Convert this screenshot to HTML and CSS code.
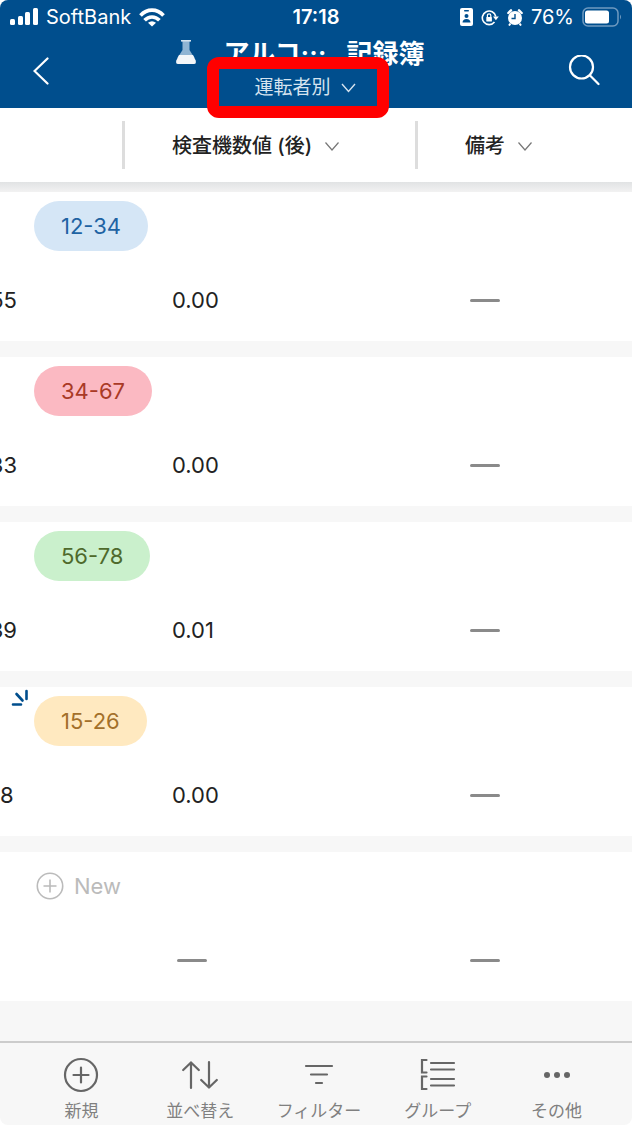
FILE: index.html
```html
<!DOCTYPE html>
<html lang="ja">
<head>
    <meta charset="UTF-8">
    <meta name="viewport" content="width=device-width, initial-scale=1.0">
    <title>アルコール記録簿</title>
    <link rel="stylesheet" href="styles.css">
</head>
<body>
<div class="app">

    <!-- Header -->
    <header class="header">
        <div class="status-bar">
            <div class="status-left">
                <svg width="28" height="18" viewBox="0 0 28 18" fill="#fff">
                    <rect x="0" y="11" width="5" height="6" rx="1.5"/>
                    <rect x="8" y="8" width="5" height="9" rx="1.5"/>
                    <rect x="15" y="4" width="5" height="13" rx="1.5"/>
                    <rect x="23" y="0" width="5" height="17" rx="1.5"/>
                </svg>
                <span>SoftBank</span>
                <svg width="26" height="19" viewBox="0 0 26 19" fill="none" stroke="#fff" stroke-width="3.6">
                    <path d="M1.5 7.5C8 .3 18 .3 24.500 7.500"/>
                    <path d="M5.600 12.300C9.800 7.800 16.200 7.800 20.400 12.300"/>
                    <path d="M13 18.500L9 14.800Q13 11.500 17 14.800Z" fill="#fff" stroke="none"/>
                </svg>
            </div>
            <span class="clock">17:18</span>
            <div class="status-right">
                <svg width="13" height="18" viewBox="0 0 13 18">
                    <rect width="13" height="18" rx="2" fill="#fff"/>
                    <rect x="4" y="2" width="5" height="1.500" rx=".7" fill="#004e8d"/>
                    <circle cx="6.500" cy="8" r="2" fill="#004e8d"/>
                    <path d="M2.500 14.500Q2.700 11 6.500 11T10.500 14.500Z" fill="#004e8d"/>
                </svg>
                <svg width="18" height="17" viewBox="0 0 18 17" fill="none" stroke="#fff" stroke-width="1.600">
                    <path d="M14.800 7.500A6.800 6.800 0 1 0 13.500 13"/>
                    <path d="M12 7.500h5.800l-2.900 3.700z" fill="#fff" stroke="none"/>
                    <rect x="5.300" y="8" width="5.600" height="4.500" rx=".6" fill="#fff" stroke="none"/>
                    <path d="M6.400 8V6.500a1.700 1.700 0 0 1 3.400 0V8" stroke-width="1.200"/>
                </svg>
                <svg width="16" height="17" viewBox="0 0 16 17" fill="none" stroke="#fff">
                    <circle cx="8" cy="9" r="7" fill="#fff" stroke="none"/>
                    <path d="M1.300 4L4 1.300M14.700 4L12 1.300" stroke-width="2.400" stroke-linecap="round"/>
                    <path d="M3.500 14.500L2 16.500M12.500 14.500L14 16.500" stroke-width="2"/>
                    <path d="M8 5V9.500H4.500" stroke="#004e8d" stroke-width="1.400"/>
                </svg>
                <span>76%</span>
                <svg width="40" height="20" viewBox="0 0 40 20">
                    <rect x="1" y="1" width="35" height="18" rx="5" fill="none" stroke="#6f9ac0" stroke-width="1.500"/>
                    <rect x="3" y="3.500" width="24" height="13" rx="2.500" fill="#fff"/>
                    <path d="M38 7.500q2 2.500 0 5z" fill="#6f9ac0"/>
                </svg>
            </div>
        </div>

        <div class="title-bar">
            <button class="icon-button back" aria-label="戻る">
                <svg width="16" height="28" viewBox="0 0 16 28" fill="none" stroke="#fff" stroke-width="2.200" stroke-linecap="round">
                    <path d="M14.500 1.500L1.500 14L14.500 26.500"/>
                </svg>
            </button>
            <div class="titles">
                <div class="title">
                    <svg class="flask" width="22" height="26" viewBox="0 0 22 26">
                        <path d="M6.500 1h9v1.500h-1v8.500l5 8H2.500l5-8V2.500h-1z" fill="#8fb4d3"/>
                        <path d="M6 1h10v1.500H6z" fill="#d5e3ef"/>
                        <path d="M4 16h14l2.700 5.500Q21.500 25 19 25H3Q.500 25 1.300 21.500z" fill="#f3f6f9"/>
                    </svg>
                    <h1><span>アルコ…</span><span>記録簿</span></h1>
                </div>
                <button class="view-switch">
                    <span>運転者別</span>
                    <svg width="15" height="10" viewBox="0 0 15 10" fill="none" stroke="#d5e3ef" stroke-width="1.400">
                        <path d="M1 1L7.500 8.500L14 1"/>
                    </svg>
                </button>
            </div>
            <button class="icon-button search" aria-label="検索">
                <svg width="32" height="32" viewBox="0 0 32 32" fill="none" stroke="#fff" stroke-width="2.200" stroke-linecap="round">
                    <circle cx="13.500" cy="12" r="11.500"/>
                    <path d="M21.800 20.300L30.500 29"/>
                </svg>
            </button>
        </div>
    </header>

    <!-- Records -->
    <table class="records">
        <colgroup>
            <col class="col-time">
            <col class="col-value">
            <col>
        </colgroup>
        <thead>
            <tr>
                <td></td>
                <th scope="col">
                    <button class="column-button">検査機数値 (後)
                        <svg width="14" height="9" viewBox="0 0 14 9" fill="none" stroke="#777" stroke-width="1.200"><path d="M.5 .5L7 8L13.500 .5"/></svg>
                    </button>
                </th>
                <th scope="col">
                    <button class="column-button">備考
                        <svg width="14" height="9" viewBox="0 0 14 9" fill="none" stroke="#777" stroke-width="1.200"><path d="M.5 .5L7 8L13.500 .5"/></svg>
                    </button>
                </th>
            </tr>
        </thead>
        <tbody>
            <tr class="car first">
                <th colspan="3"><span class="pill blue">12-34</span></th>
            </tr>
            <tr class="values">
                <td><div class="clip">55</div></td>
                <td>0.00</td>
                <td><span class="dash"></span></td>
            </tr>
        </tbody>
        <tbody>
            <tr class="car">
                <th colspan="3"><span class="pill red">34-67</span></th>
            </tr>
            <tr class="values">
                <td><div class="clip">33</div></td>
                <td>0.00</td>
                <td><span class="dash"></span></td>
            </tr>
        </tbody>
        <tbody>
            <tr class="car">
                <th colspan="3"><span class="pill green">56-78</span></th>
            </tr>
            <tr class="values">
                <td><div class="clip">39</div></td>
                <td>0.01</td>
                <td><span class="dash"></span></td>
            </tr>
        </tbody>
        <tbody>
            <tr class="car">
                <th colspan="3">
                    <svg class="new-mark" width="18" height="18" viewBox="0 0 18 18" fill="none" stroke="#004e8d" stroke-width="2.600" stroke-linecap="round">
                        <path d="M2 15.500H10M5.500 5L11.500 11.500M15.500 2V10"/>
                    </svg>
                    <span class="pill yellow">15-26</span>
                </th>
            </tr>
            <tr class="values">
                <td><div class="clip short">8</div></td>
                <td>0.00</td>
                <td><span class="dash"></span></td>
            </tr>
        </tbody>
        <tbody>
            <tr class="car">
                <th colspan="3">
                    <button class="new-button">
                        <svg width="28" height="28" viewBox="0 0 28 28" fill="none" stroke="#bbb" stroke-width="1.600">
                            <circle cx="14" cy="14" r="12.700"/>
                            <path d="M7.500 14H20.500M14 7.500V20.500"/>
                        </svg>
                        New
                    </button>
                </th>
            </tr>
            <tr class="values">
                <td></td>
                <td><span class="dash"></span></td>
                <td><span class="dash"></span></td>
            </tr>
        </tbody>
    </table>

    <!-- Toolbar -->
    <nav class="toolbar">
        <button>
            <svg width="36" height="36" viewBox="0 0 36 36">
                <circle cx="18" cy="18" r="16"/>
                <path d="M10.500 18H25.500M18 10.500V25.500"/>
            </svg>
            新規
        </button>
        <button>
            <svg width="36" height="36" viewBox="0 0 36 36">
                <path d="M9 31V5.500M1.200 13L9 5.500L16.800 13M27 5V30.500M19.200 23L27 30.500L34.800 23"/>
            </svg>
            並べ替え
        </button>
        <button>
            <svg width="36" height="36" viewBox="0 0 36 36">
                <path d="M5 9H31M10 17.500H26M15 26H21"/>
            </svg>
            フィルター
        </button>
        <button>
            <svg width="36" height="36" viewBox="0 0 36 36">
                <path d="M11 6H34M11 12.500H34M11 22H34M11 28.500H34M6.500 3H2V15.500H6.500M6.500 19.500H2V32H6.500"/>
            </svg>
            グループ
        </button>
        <button>
            <svg class="dots" width="36" height="36" viewBox="0 0 36 36">
                <circle cx="8" cy="18" r="3"/>
                <circle cx="18" cy="18" r="3"/>
                <circle cx="28" cy="18" r="3"/>
            </svg>
            その他
        </button>
    </nav>

</div>
</body>
</html>
```

FILE: styles.css
```css
* {
    margin: 0;
    padding: 0;
    box-sizing: border-box;
}
body {
    background: #fff;
    font-family: Inter, "Noto Sans CJK JP", sans-serif;
    color: #222;
}
button {
    background: none;
    border: none;
    font: inherit;
    color: inherit;
    cursor: pointer;
}
svg {
    display: block;
    flex-shrink: 0;
}
.app {
    display: flex;
    flex-direction: column;
    min-height: 100vh;
    background: #f7f7f7;
    border-radius: 8px;
}

/* Header */
.header {
    background: #004e8d;
    color: #fff;
    border-radius: 8px 8px 0 0;
}
.status-bar {
    display: grid;
    grid-template-columns: 1fr auto 1fr;
    align-items: center;
    height: 34px;
    padding: 0 10px;
    font-size: 20px;
    line-height: 24px;
}
.status-left, .status-right {
    display: flex;
    align-items: center;
    gap: 8px;
}
.status-right {
    justify-content: flex-end;
}
.clock {
    font-weight: 600;
}
.title-bar {
    display: flex;
    height: 74px;
}
.icon-button {
    display: flex;
    align-items: center;
}
.back {
    width: 62px;
    padding-left: 33px;
}
.search {
    width: 98px;
    padding-left: 34px;
}
.titles {
    flex: 1;
    display: flex;
    flex-direction: column;
    align-items: center;
}
.title {
    display: flex;
    align-items: center;
    gap: 26px;
    height: 36px;
    padding-left: 4px;
}
.title h1 {
    display: flex;
    gap: 20px;
    font-size: 26px;
    line-height: 36px;
    font-weight: 700;
    font-family: "Noto Sans CJK JP", sans-serif;
}
.view-switch {
    position: relative;
    z-index: 1;
    display: flex;
    align-items: center;
    justify-content: center;
    flex-shrink: 0;
    gap: 10px;
    width: 182px;
    height: 61px;
    margin-top: -13px;
    padding-left: 14px;
    background: #004e8d;
    border: 12px solid #f00;
    border-radius: 12px;
    color: #d5e3ef;
    font-size: 19px;
    line-height: 28px;
    font-weight: 400;
}

/* Records table */
.records {
    width: 100%;
    table-layout: fixed;
    border-spacing: 0;
    background: #fff;
    font-size: 22px;
    line-height: 28px;
}
.col-time {
    width: 122px;
}
.col-value {
    width: 293px;
}
.records th {
    text-align: left;
    font-weight: 400;
}
.records thead tr {
    height: 74px;
}
.column-button {
    display: flex;
    align-items: center;
    gap: 13px;
    width: 100%;
    height: 48px;
    padding: 2px 0 0 47px;
    border-left: 3px solid #ddd;
    font-size: 20px;
    font-weight: 500;
    white-space: nowrap;
}
.car th {
    position: relative;
    height: 59px;
    padding: 9px 0 0 34px;
}
/* shadow of the column bar */
.first th {
    height: 69px;
    padding-top: 19px;
    background: linear-gradient(#e1e3e4, #f2f2f2) top / 100% 10px no-repeat;
}
.pill {
    display: block;
    width: fit-content;
    height: 50px;
    padding: 0 27px;
    border-radius: 25px;
    line-height: 50px;
}
.blue { background: #d5e6f6; color: #1f63a3; }
.red { background: #fbb9c2; color: #a93a26; }
.green { background: #caf0cc; color: #4f6a2c; }
.yellow { background: #ffe9c0; color: #a3702a; }
.new-mark {
    position: absolute;
    top: 2px;
    left: 11px;
}
.values td {
    height: 106px;
    padding: 8px 0 0 50px;
    border-bottom: 16px solid #f7f7f7;
}
.values td:first-child {
    padding-left: 0;
}
.clip {
    display: flex;
    justify-content: flex-end;
    width: 17px;
    overflow: hidden;
}
.clip.short {
    justify-content: flex-start;
}
.dash {
    display: block;
    width: 30px;
    height: 3px;
    margin-left: 5px;
    border-radius: 2px;
    background: #8a8a8a;
}
.new-button {
    display: flex;
    align-items: center;
    gap: 10px;
    height: 50px;
    padding-left: 2px;
    color: #bbb;
}

/* Toolbar */
.toolbar {
    display: flex;
    margin-top: auto;
    padding: 14px 16px 0 22px;
    height: 84px;
    border-top: 2px solid #ccc;
}
.toolbar button {
    flex: 1;
    display: flex;
    flex-direction: column;
    align-items: center;
    gap: 6px;
    color: #808080;
    font-size: 17px;
    line-height: 24px;
    font-weight: 400;
    white-space: nowrap;
}
.toolbar svg {
    fill: none;
    stroke: #666;
    stroke-width: 2.2px;
    stroke-linecap: round;
}
.toolbar .dots {
    fill: #666;
    stroke: none;
}
```
